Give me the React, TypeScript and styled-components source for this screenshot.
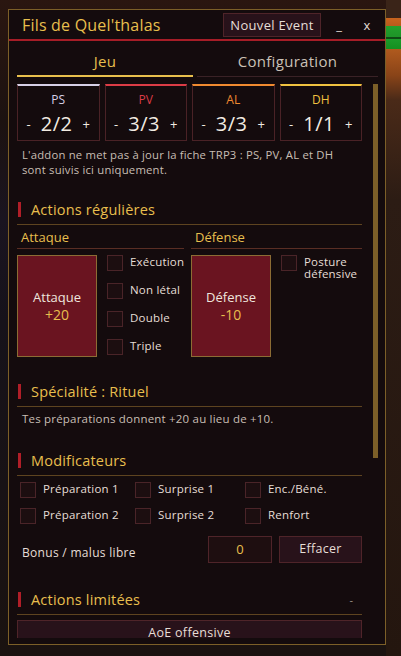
import styled, { createGlobalStyle } from 'styled-components';

const GlobalStyle = createGlobalStyle`
  html, body {
    margin: 0;
    padding: 0;
  }
  body {
    font-family: 'Open Sans', 'DejaVu Sans', sans-serif;
    background:
      linear-gradient(to bottom, #3a2418 0, #3a2418 18px, #c8641e 18px, #b85a1c 26px,
        #22a02c 26px, #1e9428 37px, #0e4a14 37px, #0e4a14 39px, #1c9c2a 39px, #159020 49px,
        #b05a1e 49px, #8a4418 75px, #4a2a18 100px, #2c1c14 200px, #24160f 656px)
        right top / 15px 100% no-repeat,
      linear-gradient(to bottom, #2a1610 0, #1c1210 120px, #1a1420 220px, #16121a 320px, #1a1210 656px);
    min-height: 656px;
  }
`;

const GOLD = '#e8bf4d';

const Frame = styled.div`
  padding: 9px 0 0 8px;
`;

const Window = styled.div`
  width: 378px;
  height: 636px;
  box-sizing: border-box;
  border: 1px solid #7c5f28;
  background: #140b0d;
  display: flex;
  flex-direction: column;
  overflow: hidden;
`;

const TitleBar = styled.div`
  height: 29px;
  display: flex;
  align-items: center;
  padding: 0 8px 0 13px;
  border-bottom: 2px solid #a61d27;
`;

const Title = styled.div`
  flex: 1;
  color: ${GOLD};
  font-size: 16px;
  letter-spacing: 0.2px;
`;

const NewEventButton = styled.button`
  width: 98px;
  height: 24px;
  padding: 0;
  background: #28121a;
  border: 1px solid #4f2429;
  color: #e6ded6;
  font-family: inherit;
  font-size: 13px;
  letter-spacing: 0.3px;
`;

const WinControl = styled.span`
  width: 20px;
  text-align: center;
  color: #e6ded6;
  font-size: 13px;
  margin-left: 8px;
`;

const Tabs = styled.div`
  display: flex;
  gap: 4px;
  margin: 0 0 0 8px;
  height: 36px;
`;

const Tab = styled.div<{ $active?: boolean; $w: number }>`
  width: ${({ $w }) => $w}px;
  display: flex;
  align-items: center;
  justify-content: center;
  font-size: 15px;
  letter-spacing: 0.3px;
  color: ${({ $active }) => ($active ? GOLD : '#c9c0b6')};
  border-bottom: ${({ $active }) => ($active ? `2px solid ${GOLD}` : '1px solid #3a2226')};
  box-sizing: border-box;
  padding-top: 5px;
  padding-bottom: ${({ $active }) => ($active ? 0 : 1)}px;
`;

const Body = styled.div`
  flex: 1;
  display: flex;
  overflow: hidden;
  padding: 7px 0 6px 8px;
`;

const Content = styled.div`
  width: 345px;
  flex: none;
  overflow: hidden;
`;

const ScrollThumb = styled.div`
  width: 5px;
  height: 374px;
  margin-left: 11px;
  background: #7c5f28;
`;

const StatsRow = styled.div`
  display: grid;
  grid-template-columns: repeat(4, 1fr);
  gap: 5px;
`;

const StatBox = styled.div<{ $color: string }>`
  height: 57px;
  box-sizing: border-box;
  border: 1px solid #4a2226;
  border-top: 2px solid ${({ $color }) => $color};
  display: flex;
  flex-direction: column;
  align-items: center;
`;

const StatLabel = styled.div<{ $color: string }>`
  margin-top: 5px;
  font-size: 12px;
  color: ${({ $color }) => $color};
`;

const StatValue = styled.div`
  display: flex;
  align-items: center;
  gap: 10px;
  color: #f2ebe2;
  margin-top: 2px;
`;

const StatStep = styled.span`
  font-size: 13px;
`;

const StatNumber = styled.span`
  font-size: 20px;
  letter-spacing: 0.5px;
`;

const Note = styled.div`
  margin: 6px 0 0 5px;
  font-size: 11.3px;
  line-height: 15px;
  color: #c8beb4;
  letter-spacing: 0.2px;
`;

const SectionHeader = styled.div<{ $top: number }>`
  margin-top: ${({ $top }) => $top}px;
  display: flex;
  align-items: center;
  gap: 10px;
  height: 26px;
  border-bottom: 1px solid #5e4420;
  padding-bottom: 2px;
`;

const RedBar = styled.span`
  width: 3px;
  height: 15px;
  margin-left: 1px;
  background: #b01e28;
`;

const SectionTitle = styled.span`
  flex: 1;
  color: ${GOLD};
  font-size: 14.5px;
  letter-spacing: 0.2px;
`;

const Collapse = styled.span`
  color: #9a928a;
  font-size: 11px;
  margin-right: 9px;
`;

const Columns = styled.div`
  display: grid;
  grid-template-columns: 167px 171px;
  gap: 7px;
`;

const ColumnHeader = styled.div`
  height: 23px;
  display: flex;
  align-items: center;
  padding-left: 4px;
  color: ${GOLD};
  font-size: 13px;
  border-bottom: 1px solid #5a2e24;
`;

const ColumnBody = styled.div`
  display: flex;
  margin-top: 6px;
`;

const ActionButton = styled.button`
  width: 80px;
  height: 102px;
  flex: none;
  padding: 0;
  background: #6a1420;
  border: 1px solid #8c6c34;
  color: #eee6de;
  font-family: inherit;
  font-size: 13px;
  line-height: 17px;
  display: flex;
  flex-direction: column;
  align-items: center;
  justify-content: center;
`;

const ActionBonus = styled.span`
  color: ${GOLD};
  font-size: 14px;
`;

const CheckList = styled.div`
  display: flex;
  flex-direction: column;
  gap: 12px;
  margin-left: 10px;
`;

const CheckRow = styled.label`
  display: flex;
  align-items: flex-start;
  gap: 7px;
  color: #e6ded6;
  font-size: 11.5px;
  line-height: 12px;
  letter-spacing: 0.2px;
`;

const CheckBox = styled.span`
  width: 16px;
  height: 16px;
  flex: none;
  box-sizing: border-box;
  border: 1px solid #4a2428;
  background: #1c0e10;
`;

const CheckText = styled.span`
  padding-top: 1px;
`;

const Paragraph = styled.div`
  margin: 4px 0 0 5px;
  font-size: 11.5px;
  color: #c8beb4;
  letter-spacing: 0.2px;
`;

const ModGrid = styled.div`
  display: grid;
  grid-template-columns: 115px 110px 1fr;
  row-gap: 10px;
  margin: 6px 0 0 3px;
`;

const FreeRow = styled.div`
  display: flex;
  align-items: center;
  gap: 7px;
  margin-top: 12px;
`;

const FreeLabel = styled.div`
  flex: 1;
  padding: 6px 0 0 5px;
  font-size: 12px;
  color: #e6ded6;
  letter-spacing: 0.3px;
`;

const ValueInput = styled.div`
  width: 64px;
  height: 27px;
  box-sizing: border-box;
  border: 1px solid #4f2429;
  background: #1e0e10;
  color: ${GOLD};
  font-size: 13px;
  display: flex;
  align-items: center;
  justify-content: center;
  padding-bottom: 2px;
`;

const DarkButton = styled.button<{ $w?: number }>`
  width: ${({ $w }) => ($w ? `${$w}px` : '100%')};
  height: 27px;
  padding: 0 0 2px;
  box-sizing: border-box;
  border: 1px solid #4f2429;
  background: #28121a;
  color: #e6ded6;
  font-family: inherit;
  font-size: 12.5px;
  letter-spacing: 0.3px;
`;

const LimitedList = styled.div`
  margin-top: 5px;
`;

const stats = [
  { label: 'PS', color: '#d6cfe6', value: '2/2' },
  { label: 'PV', color: '#dc3c46', value: '3/3' },
  { label: 'AL', color: '#f08a30', value: '3/3' },
  { label: 'DH', color: '#f0c240', value: '1/1' },
];

const Check = ({ label }: { label: React.ReactNode }) => (
  <CheckRow>
    <CheckBox />
    <CheckText>{label}</CheckText>
  </CheckRow>
);

export default function App() {
  return (
    <>
      <GlobalStyle />
      <Frame>
        <Window>
          <TitleBar>
            <Title>Fils de Quel'thalas</Title>
            <NewEventButton>Nouvel Event</NewEventButton>
            <WinControl>_</WinControl>
            <WinControl>x</WinControl>
          </TitleBar>
          <Tabs>
            <Tab $active $w={176}>Jeu</Tab>
            <Tab $w={181}>Configuration</Tab>
          </Tabs>
          <Body>
            <Content>
              <StatsRow>
                {stats.map((s) => (
                  <StatBox key={s.label} $color={s.color}>
                    <StatLabel $color={s.color}>{s.label}</StatLabel>
                    <StatValue>
                      <StatStep>-</StatStep>
                      <StatNumber>{s.value}</StatNumber>
                      <StatStep>+</StatStep>
                    </StatValue>
                  </StatBox>
                ))}
              </StatsRow>
              <Note>
                L'addon ne met pas à jour la fiche TRP3 : PS, PV, AL et DH
                <br />
                sont suivis ici uniquement.
              </Note>

              <SectionHeader $top={19}>
                <RedBar />
                <SectionTitle>Actions régulières</SectionTitle>
              </SectionHeader>
              <Columns>
                <div>
                  <ColumnHeader>Attaque</ColumnHeader>
                  <ColumnBody>
                    <ActionButton>
                      Attaque
                      <ActionBonus>+20</ActionBonus>
                    </ActionButton>
                    <CheckList>
                      <Check label="Exécution" />
                      <Check label="Non létal" />
                      <Check label="Double" />
                      <Check label="Triple" />
                    </CheckList>
                  </ColumnBody>
                </div>
                <div>
                  <ColumnHeader>Défense</ColumnHeader>
                  <ColumnBody>
                    <ActionButton>
                      Défense
                      <ActionBonus>-10</ActionBonus>
                    </ActionButton>
                    <CheckList>
                      <Check
                        label={
                          <>
                            Posture
                            <br />
                            défensive
                          </>
                        }
                      />
                    </CheckList>
                  </ColumnBody>
                </div>
              </Columns>

              <SectionHeader $top={21}>
                <RedBar />
                <SectionTitle>Spécialité : Rituel</SectionTitle>
              </SectionHeader>
              <Paragraph>Tes préparations donnent +20 au lieu de +10.</Paragraph>

              <SectionHeader $top={21}>
                <RedBar />
                <SectionTitle>Modificateurs</SectionTitle>
              </SectionHeader>
              <ModGrid>
                <Check label="Préparation 1" />
                <Check label="Surprise 1" />
                <Check label="Enc./Béné." />
                <Check label="Préparation 2" />
                <Check label="Surprise 2" />
                <Check label="Renfort" />
              </ModGrid>
              <FreeRow>
                <FreeLabel>Bonus / malus libre</FreeLabel>
                <ValueInput>0</ValueInput>
                <DarkButton $w={83}>Effacer</DarkButton>
              </FreeRow>

              <SectionHeader $top={23}>
                <RedBar />
                <SectionTitle>Actions limitées</SectionTitle>
                <Collapse>-</Collapse>
              </SectionHeader>
              <LimitedList>
                <DarkButton>AoE offensive</DarkButton>
              </LimitedList>
            </Content>
            <ScrollThumb />
          </Body>
        </Window>
      </Frame>
    </>
  );
}
